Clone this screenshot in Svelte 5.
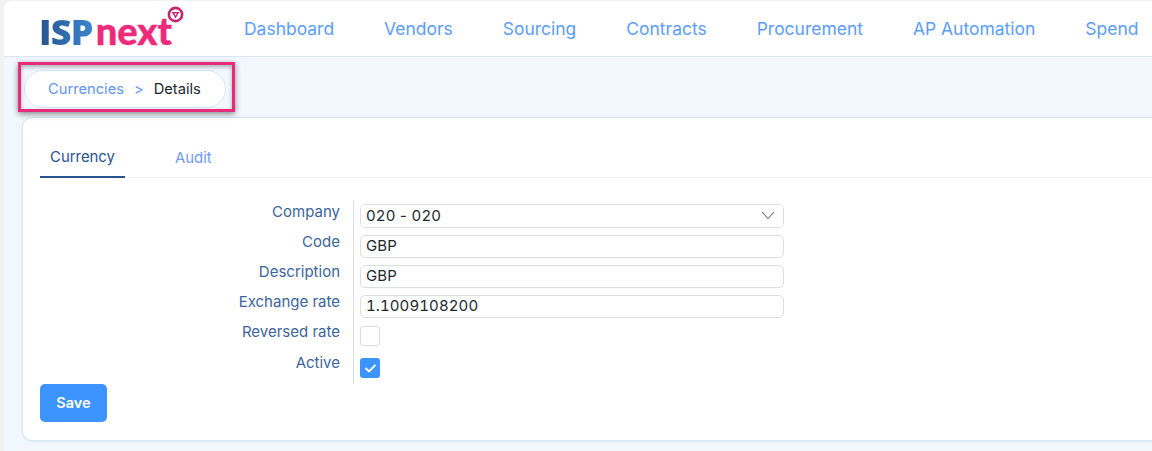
<script lang="ts">
	const nav = ['Dashboard', 'Vendors', 'Sourcing', 'Contracts', 'Procurement', 'AP Automation', 'Spend'];
	const fields = [
		{ label: 'Code', value: 'GBP' },
		{ label: 'Description', value: 'GBP' },
		{ label: 'Exchange rate', value: '1.1009108200' }
	];
</script>

<div class="frame">
	<header>
		<div class="logo">
			<span class="isp">ISP</span><span class="next">next</span>
			<svg class="badge" width="17" height="17" viewBox="0 0 17 17">
				<circle cx="8.5" cy="8.5" r="6.6" fill="none" stroke="#c2286f" stroke-width="2.6" />
				<path d="M4.6 6h7.8L8.5 12.6z" fill="#c2286f" />
				<path d="M7 7.4h3L8.5 9.8z" fill="#fff" />
			</svg>
		</div>
		<nav>
			{#each nav as item}
				<span>{item}</span>
			{/each}
		</nav>
	</header>

	<div class="crumbs-row">
		<div class="crumbs">
			<span class="link">Currencies</span>
			<span class="link sep">&gt;</span>
			<span class="current">Details</span>
		</div>
		<div class="mark"></div>
	</div>

	<section class="card">
		<div class="tabs">
			<span class="tab active">Currency</span>
			<span class="tab">Audit</span>
		</div>
		<div class="form">
			<div class="labels">
				<label>Company</label>
				{#each fields as f}
					<label>{f.label}</label>
				{/each}
				<label>Reversed rate</label>
				<label class="l-active">Active</label>
			</div>
			<div class="controls">
				<div class="input select">
					<span>020 - 020</span>
					<svg width="14" height="9" viewBox="0 0 14 9">
						<path d="M1 1l6 6.5L13 1" fill="none" stroke="#6b7075" stroke-width="1.1" />
					</svg>
				</div>
				{#each fields as f}
					<div class="input">{f.value}</div>
				{/each}
				<div class="check"></div>
				<div class="check on">
					<svg width="13" height="10" viewBox="0 0 13 10">
						<path d="M1.5 5l3.5 3.4 6.5-6.6" fill="none" stroke="#fff" stroke-width="1.9" />
					</svg>
				</div>
			</div>
		</div>
		<button type="button">Save</button>
	</section>
</div>

<style>
	:global(body) {
		margin: 0;
		background: #f2f2f2;
		overflow: hidden;
	}

	.frame {
		position: relative;
		height: 450px;
		margin: 1px 0 0 4px;
		background: #f3f8fe;
		border-radius: 8px 0 0 0;
		overflow: hidden;
		font-family: Inter, sans-serif;
		font-size: 15px;
	}

	header {
		display: flex;
		align-items: center;
		height: 55px;
		background: #fff;
		border-bottom: 1px solid #d5e6f7;
	}

	.logo {
		position: relative;
		display: flex;
		align-items: baseline;
		width: 240px;
		height: 55px;
		margin-top: -1px;
		padding-left: 35px;
		box-sizing: border-box;
		line-height: 58px;
		flex: none;
		white-space: nowrap;
	}

	.isp {
		font-family: "Open Sans", sans-serif;
		font-weight: 800;
		font-size: 36px;
		letter-spacing: -0.8px;
		background: linear-gradient(90deg, #27548f, #3a86cf);
		-webkit-background-clip: text;
		background-clip: text;
		color: transparent;
	}

	.next {
		font-family: Lato, sans-serif;
		font-weight: 900;
		font-size: 38px;
		color: #ee2a7b;
		margin-left: 3px;
		-webkit-text-stroke: 0.4px #ee2a7b;
	}

	.badge {
		position: absolute;
		left: 163px;
		top: 5px;
	}

	nav {
		display: flex;
		gap: 50px;
		white-space: nowrap;
		font-size: 17.48px;
		color: #5b9dfa;
	}

	.crumbs-row {
		position: relative;
		height: 61px;
		padding: 13px 0 0 20px;
		box-sizing: border-box;
	}

	.crumbs {
		display: flex;
		align-items: center;
		gap: 10px;
		width: 202px;
		height: 38px;
		box-sizing: border-box;
		padding: 0 0 1px 23px;
		font-size: 14.7px;
		background: #fff;
		border: 1px solid #d5e6f7;
		border-radius: 19px;
	}

	.link {
		color: #5f95f8;
	}

	.current {
		color: #22272e;
	}

	.mark {
		position: absolute;
		left: 14px;
		top: 5px;
		width: 217px;
		height: 50px;
		box-sizing: border-box;
		border: 3px solid #ea2a7b;
		box-shadow: 0 2px 6px rgba(0, 0, 0, 0.45), inset 0 2px 4px rgba(0, 0, 0, 0.3);
	}

	.card {
		margin-left: 18px;
		margin-top: -1px;
		height: 324px;
		width: 1200px;
		box-sizing: border-box;
		background: #fff;
		border: 1px solid #d5e6f7;
		border-radius: 10px;
		box-shadow: 0 1px 3px rgba(80, 130, 190, 0.12);
		padding: 0 17px;
	}

	.tabs {
		display: flex;
		height: 60px;
		border-bottom: 1px solid #eef0f2;
		box-sizing: border-box;
	}

	.tab {
		display: flex;
		align-items: center;
		padding: 18px 10px 0;
		height: 60px;
		box-sizing: border-box;
		color: #6f9bf7;
		margin-left: 40px;
		font-size: 14.9px;
	}

	.tab:first-child {
		margin-left: 0;
	}

	.tab.active {
		color: #27548f;
		border-bottom: 2px solid #27548f;
		padding-top: 20px;
	}

	.tab:not(.active) {
		margin-top: 1px;
	}

	.form {
		display: flex;
		margin-top: 23px;
	}

	.labels {
		width: 300px;
		padding-right: 13px;
		text-align: right;
		color: #3d659c;
		flex: none;
		display: flex;
		flex-direction: column;
		align-items: flex-end;
	}

	.labels label {
		height: 30px;
		line-height: 22px;
	}

	.labels .l-active {
		height: 22px;
		margin-top: 1px;
	}

	.controls {
		width: 424px;
		border-left: 1px solid #d9dcdf;
		padding-left: 6px;
		padding-top: 3px;
		height: 180px;
	}

	.input {
		display: flex;
		align-items: center;
		justify-content: space-between;
		height: 23px;
		box-sizing: border-box;
		width: 424px;
		margin-bottom: 7px;
		padding: 0 5px 2px;
		border: 1px solid #dcdfe2;
		border-radius: 5px;
		color: #22272e;
		letter-spacing: 0.1px;
		font-variant-numeric: tabular-nums;
	}

	.select {
		height: 24px;
		padding-right: 8px;
		word-spacing: -1px;
	}

	.check {
		width: 20px;
		height: 20px;
		box-sizing: border-box;
		margin: 8px 0 12px;
		border: 1px solid #dcdfe2;
		border-radius: 3px;
	}

	.check.on {
		display: flex;
		align-items: center;
		justify-content: center;
		margin: 0;
		border: none;
		background: #3d94ff;
	}

	button {
		display: block;
		width: 67px;
		height: 38px;
		padding: 0 0 2px;
		border: none;
		border-radius: 5px;
		background: #3d94ff;
		color: #fff;
		font-family: inherit;
		font-size: 14.5px;
		font-weight: 600;
	}
</style>
